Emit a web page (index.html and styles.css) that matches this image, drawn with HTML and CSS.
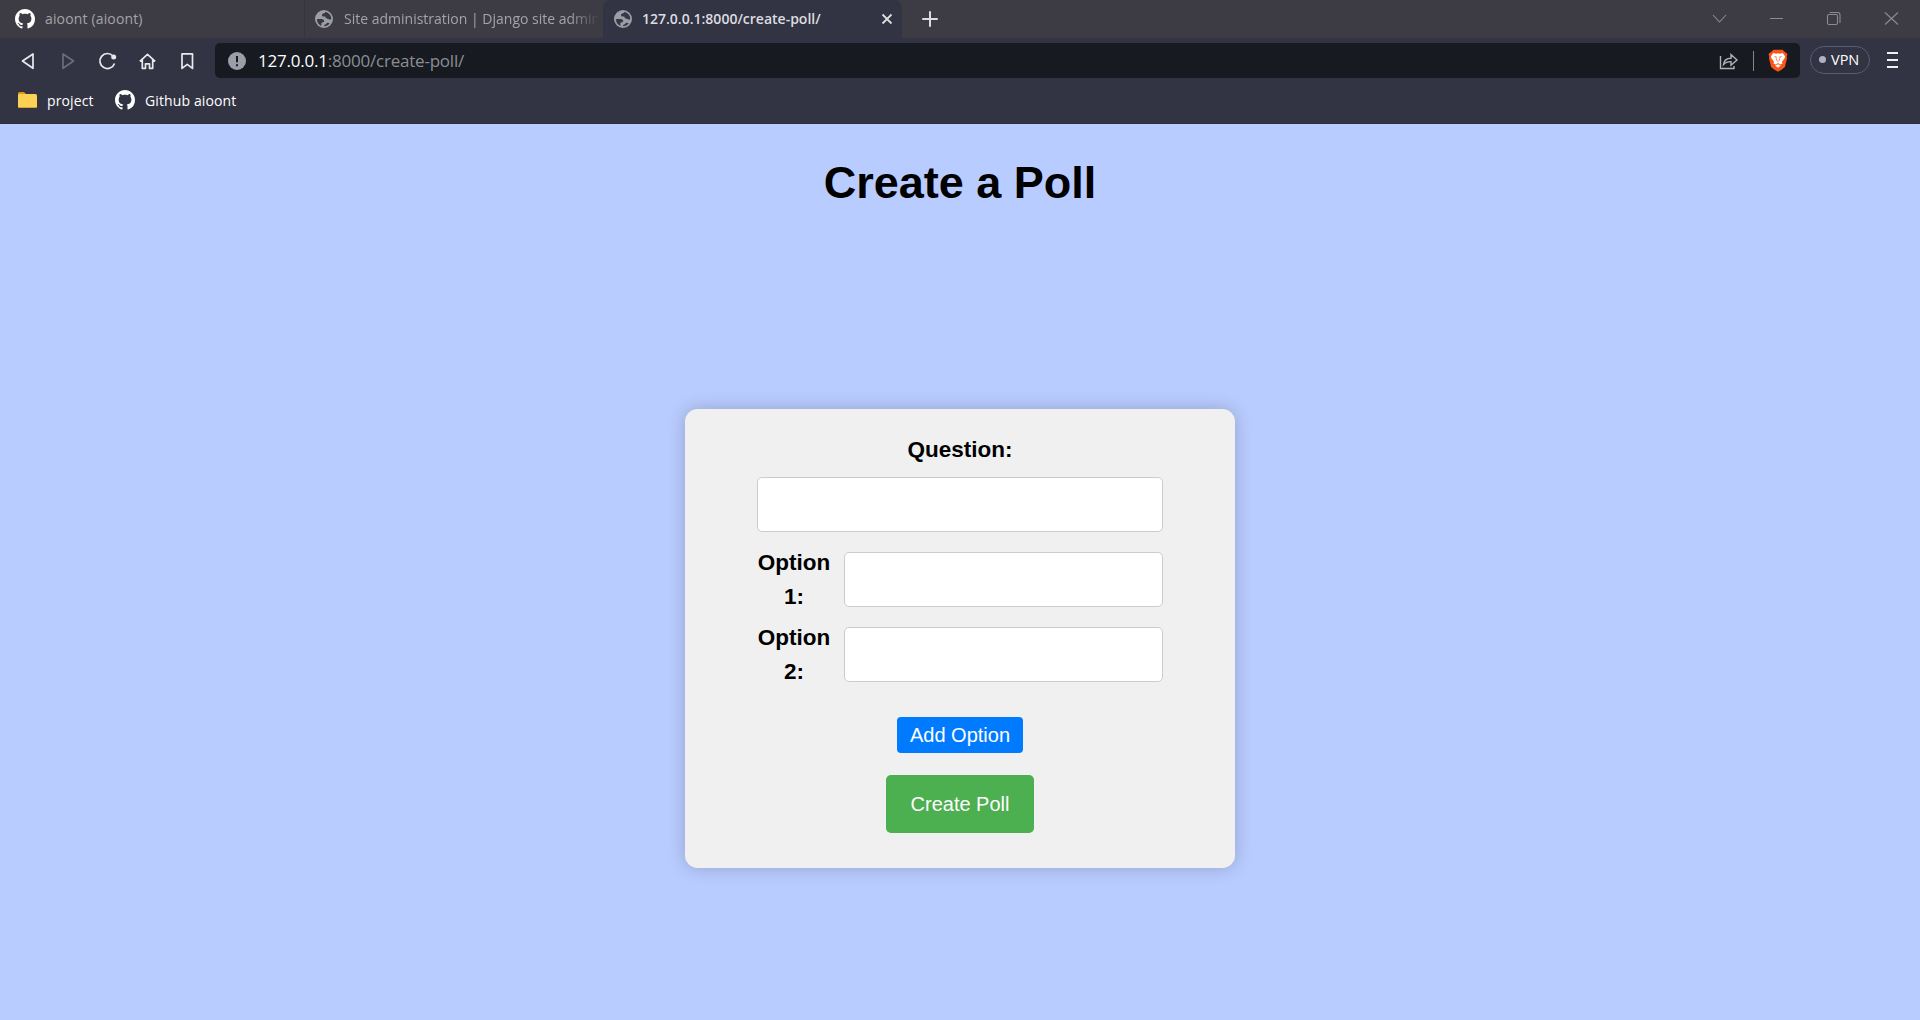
FILE: index.html
```html
<!DOCTYPE html>
<html lang="en">
<head>
<meta charset="utf-8">
<title>Create a Poll</title>
<link rel="stylesheet" href="styles.css">
</head>
<body>
<svg class="defs" aria-hidden="true">
  <symbol id="github" viewBox="0 0 16 16"><path fill="#fff" d="M8 0C3.58 0 0 3.58 0 8c0 3.54 2.29 6.53 5.47 7.59.4.07.55-.17.55-.38 0-.19-.01-.82-.01-1.49-2.01.37-2.53-.49-2.69-.94-.09-.23-.48-.94-.82-1.13-.28-.15-.68-.52-.01-.53.63-.01 1.08.58 1.23.82.72 1.21 1.87.87 2.33.66.07-.52.28-.87.51-1.07-1.78-.2-3.64-.89-3.64-3.95 0-.87.31-1.59.82-2.15-.08-.2-.36-1.02.08-2.12 0 0 .67-.21 2.2.82.64-.18 1.32-.27 2-.27s1.36.09 2 .27c1.53-1.04 2.2-.82 2.2-.82.44 1.1.16 1.92.08 2.12.51.56.82 1.27.82 2.15 0 3.07-1.87 3.75-3.65 3.95.29.25.54.73.54 1.48 0 1.07-.01 1.93-.01 2.2 0 .21.15.46.55.38A8.01 8.01 0 0 0 16 8c0-4.42-3.58-8-8-8z"/></symbol>
  <symbol id="globe" viewBox="0 0 18 18"><circle cx="9" cy="9" r="9" fill="#9b9ea8"/><path fill="#373842" d="M10.500 2c-.2 1-1.200 1.200-2.200 1.500-.9.300-1.300.9-1.300 1.700 0 .9.700 1.300 1.500 1.300h1.300c.6 0 .8.500.8 1 0 .8.800 1.200 1.700 1.200.9 0 1.300.6 2 .8.900.2 1.700 0 2-.5.100-3.400-2.300-6.300-5.800-7zM1.900 9.300c1.300-.4 3-.3 4.600-.3 1.500 0 2.700.8 2.700 2 0 1-.9 1.400-1.900 1.400-.8 0-.9.600-.9 1.300v2.200C3.800 14.900 2 12.500 1.900 9.300zM9 16.200c0-1 .4-1.500 1.300-1.700 1.200-.3 1.200-1.500 2.200-1.700l2.300.5c-1.300 1.800-3.300 2.900-5.800 2.900z"/></symbol>
</svg>
<header class="browser">
  <div class="tabs">
    <div class="tab tab-first"><svg class="i20"><use href="#github"/></svg><span class="t1">aioont (aioont)</span></div>
    <div class="tab tab-second"><svg class="i18"><use href="#globe"/></svg><span class="t2">Site administration | Django site admin</span></div>
    <div class="tab tab-active"><svg class="i18"><use href="#globe"/></svg><span class="t3">127.0.0.1:8000/create-poll/</span>
      <svg class="close" viewBox="0 0 12 12"><path d="M1.500 1.500l9 9M10.500 1.500l-9 9" stroke="#dcdde0" stroke-width="1.800"/></svg></div>
    <svg class="plus" viewBox="0 0 16 16"><path d="M8 1v14M1 8h14" stroke="#dcdde0" stroke-width="2" stroke-linecap="round"/></svg>
    <svg class="window" viewBox="0 0 200 38" fill="none" stroke="#8b8b90" stroke-width="1.100"><path d="M8 15l6.500 7 6.500-7M65 18.500h13M180 12.500l13 12M193 12.500l-13 12"/><rect x="122.500" y="14.500" width="10" height="10" rx="1.500"/><path d="M124.500 12.500h8a2.500 2.500 0 0 1 2.500 2.500v8"/></svg>
  </div>
  <div class="toolbar">
    <svg class="nav" viewBox="0 0 215 42" fill="none" stroke="#e9e9ec" stroke-width="1.700" stroke-linejoin="round">
      <path d="M33 15v14.300L22.500 22z"/><path stroke="#6b6d78" d="M63 15v14.300L73.500 22z"/>
      <path d="M114.500 24.500a7.500 7.500 0 1 1-1.500-7.500"/><circle cx="113.700" cy="17.900" r="2.500" fill="#e9e9ec" stroke="none"/>
      <path d="M139.800 22.300l7.700-7 7.700 7M142.300 20.500v8.800h3.200v-4.500h4v4.500h3.200v-8.800"/><path d="M182 14.900h10.500v14.500l-5.250-4-5.250 4z"/>
    </svg>
    <div class="address">
      <svg class="i18" viewBox="0 0 18 18"><circle cx="9" cy="9" r="9" fill="#9b9ea8"/><path d="M9 4v6.200M9 12.200v2" stroke="#171a21" stroke-width="2"/></svg>
      <span class="url"><b>127.0.0.1</b>:8000/create-poll/</span>
      <svg class="share" viewBox="0 0 20 20" fill="none" stroke="#b0b2b8" stroke-width="1.400"><path d="M1.500 5v12.500h13.500V15M4.500 13.500C5 9 8 7.300 12 7.300V3.500L18 9l-6 5.200v-3.600c-3 0-5.500.5-7.500 2.900z"/></svg>
      <i class="divider"></i>
      <svg class="brave" viewBox="0 0 20 23"><path fill="#fb5417" d="M5.500.8h9L17 3l2.500 2-.8 3 .4 1-2.200 9-3 2.500L10 22.700 6.100 20.500l-3-2.500L.9 9l.4-1-.8-3L3 3z"/><path fill="#fff" d="M5.300 4l2.900.7L10 4.300l1.800.4 2.900-.7 2.500 3.400-.8 2-2.400 3.300.5 1.700-2.300 1-2.200-1.500-2.200 1.500-2.300-1 .5-1.700L3.600 9.400l-.8-2zM10 15.200l2.900 1.400L10 18.700l-2.900-2.100z"/><path fill="#fb5417" d="M5.700 7.100l3 .7-.4 1.200zM14.300 7.100l-3 .7.400 1.200zM8.800 8.300L8.200 11l1.300 1.600h1l1.300-1.600-.6-2.700-.3 3.500H9.100z"/></svg>
    </div>
    <div class="vpn"><i></i><span>VPN</span></div>
    <div class="menu"><i></i><i></i><i></i></div>
  </div>
  <div class="bookmarks">
    <svg class="folder" viewBox="0 0 19 16"><path fill="#d99a13" d="M0 1.500Q0 0 1.500 0H6l2 2h9v4H0z"/><rect y="2" width="19" height="14" rx="1.500" fill="#fdd156"/><path fill="#dba52b" d="M1 15h17v1H1z"/></svg><span class="b1">project</span>
    <svg class="i20"><use href="#github"/></svg><span class="b2">Github aioont</span>
  </div>
</header>
<main class="page">
  <h1>Create a Poll</h1>
  <form class="card">
    <label class="question" for="question">Question:</label>
    <input id="question" type="text">
    <div class="option"><label for="option1">Option 1:</label><input id="option1" type="text"></div>
    <div class="option"><label for="option2">Option 2:</label><input id="option2" type="text"></div>
    <button class="add" type="button">Add Option</button>
    <button class="create" type="button">Create Poll</button>
  </form>
</main>
</body>
</html>
```
FILE: styles.css
```css
* { box-sizing: border-box; }
body { margin: 0; height: 1020px; overflow: hidden; background: #b9ccff; font-family: "Liberation Sans", Arial, sans-serif; }
svg { display: block; flex: none; }
.defs { display: none; }
.browser { height: 124px; background: #323443; font-family: "Open Sans", "Segoe UI", sans-serif; font-size: 14px; color: #fff; white-space: nowrap; border-bottom: 1px solid #2c2e3b; }
.tabs { display: flex; align-items: center; height: 38px; background: #3d3c44; }
.tab { display: flex; align-items: center; height: 38px; color: #a3a4a9; }
.i20 { width: 20px; height: 20px; }
.i18 { width: 18px; height: 18px; }
.tab-first { width: 305px; padding-left: 15px; gap: 10px; border-right: 1px solid #35353d; }
.tab-second { width: 298px; padding-left: 10px; gap: 11px; }
.t1, .t2, .t3 { line-height: 20px; }
.t1 { letter-spacing: .15px; }
.t2 { width: 254px; overflow: hidden; -webkit-mask-image: linear-gradient(90deg, #000 225px, transparent 256px); mask-image: linear-gradient(90deg, #000 225px, transparent 256px); }
.tab-active { width: 299px; padding: 0 9px 0 11px; gap: 10px; background: #323443; border-radius: 8px 8px 0 0; color: #dcdde0; }
.t3 { font-weight: 600; }
.close { width: 12px; height: 12px; margin-left: auto; }
.plus { width: 16px; height: 16px; margin-left: 20px; }
.window { width: 200px; height: 38px; margin-left: auto; margin-right: 15px; }
.toolbar { display: flex; align-items: center; height: 45px; }
.nav { width: 215px; height: 42px; margin-bottom: 2px; }
.address { display: flex; align-items: center; width: 1585px; height: 35px; background: #171a21; border-radius: 5px; padding: 0 12px 0 13px; }
.url { margin-left: 12px; color: #8b8e94; font-size: 17px; line-height: 24px; letter-spacing: -.22px; }
.url b { color: #fff; font-weight: 400; }
.share { width: 20px; height: 20px; margin-left: auto; }
.divider { width: 1px; height: 20px; background: #85878e; margin: 0 14px 0 14px; }
.brave { width: 20px; height: 23px; }
.vpn { display: flex; align-items: center; gap: 5px; width: 60px; height: 28px; margin: 0 0 2px 10px; padding-left: 8px; border: 1px solid #5a5c70; border-radius: 14px; font-size: 14.500px; }
.vpn i { width: 7px; height: 7px; border-radius: 50%; background: #aeb0c4; }
.menu { display: grid; gap: 5px; margin: 0 0 2px 17px; }
.menu i { width: 11px; height: 2px; background: #f1f1f3; }
.bookmarks { display: flex; align-items: center; height: 36px; padding: 0 0 2px 18px; letter-spacing: .12px; }
.folder { width: 19px; height: 16px; }
.b1 { width: 68px; margin-left: 10px; }
.b2 { margin-left: 10px; }
.page { display: flex; flex-direction: column; align-items: center; }
h1 { margin: 32px 0 0; height: 253px; font-size: 45px; line-height: 54px; color: #000; }
.card { display: flex; flex-direction: column; align-items: center; width: 550px; height: 459px; padding: 24px 72px; background: #f0f0f0; border-radius: 12.5px; box-shadow: 0 0 18px rgba(0,0,0,.2); color: #000; }
label { font-size: 22.5px; font-weight: 700; line-height: 34px; text-align: center; }
.question { margin-bottom: 10px; }
input { display: block; height: 55px; width: 406px; border: 1px solid #ccc; border-radius: 5px; background: #fff; padding: 0 12px; font: 20px "Liberation Sans", sans-serif; }
.option { display: flex; width: 406px; height: 55px; margin-top: 20px; }
.option label { flex: none; width: 74px; margin: -6px 13px 0 0; }
.option input { width: 319px; }
button { border: 0; padding: 0; color: #fff; font: 20px "Liberation Sans", Arial, sans-serif; border-radius: 4px; }
.add { width: 126px; height: 36px; margin-top: 35px; background: #007bff; }
.create { width: 148px; height: 58px; margin-top: 22px; background: #4caf50; border-radius: 5px; }
```
